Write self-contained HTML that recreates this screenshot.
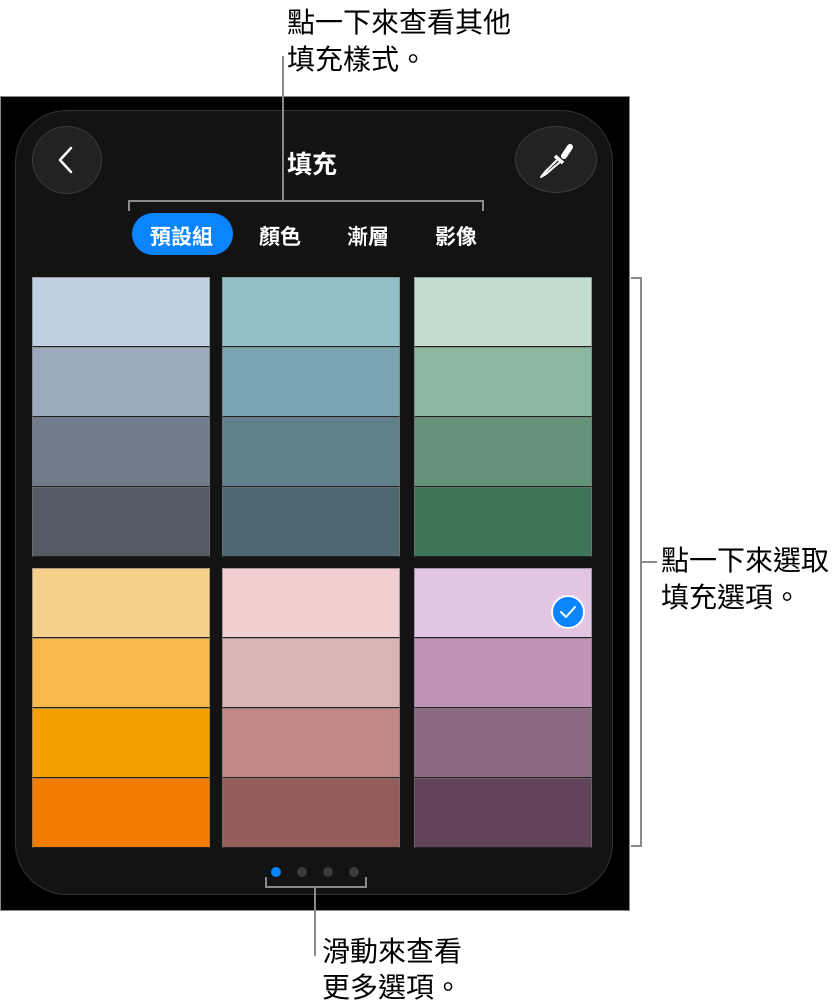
<!DOCTYPE html>
<html><head><meta charset="utf-8"><style>
*{margin:0;padding:0;box-sizing:border-box}
body{width:838px;height:1008px;background:#fff;position:relative;overflow:hidden;font-family:"Liberation Sans","Noto Sans CJK TC",sans-serif}
.abs{position:absolute}
.frame{left:0;top:96px;width:630px;height:815px;background:#000;border:1px solid #888}
.panel{left:15px;top:110px;width:598px;height:785px;background:#131313;border:1.5px solid #333;border-radius:52px}
.btn{background:#222;border:1.5px solid #3a3a3a;border-radius:50%}
.t{color:#fff;font-size:21px;font-weight:bold;white-space:nowrap}
.ann{color:#000;font-size:28px;line-height:37px;white-space:nowrap}
.sw{position:absolute;width:178px}
.sw div{height:70px;border:1px solid rgba(120,120,120,.6);border-bottom:1.5px solid #222}
.g{background:#8a8a8a}
.dot{position:absolute;top:867px;width:10px;height:10px;border-radius:50%;background:#3a3a3c}
</style></head><body>
<div class="abs ann" style="left:287px;top:4px">點一下來查看其他<br>填充樣式。</div>
<div class="abs frame"></div>
<div class="abs panel"></div>
<div class="abs g" style="left:282px;top:56px;width:2px;height:146px"></div>
<div class="abs g" style="left:128px;top:200px;width:356px;height:2px"></div>
<div class="abs g" style="left:128px;top:200px;width:2px;height:11px"></div>
<div class="abs g" style="left:482px;top:200px;width:2px;height:11px"></div>
<div class="abs btn" style="left:32px;top:126px;width:70px;height:68px"></div>
<svg class="abs" style="left:52px;top:145px" width="30" height="30"><path d="M19 3 L8 15 L19 27" stroke="#fff" stroke-width="2.5" fill="none" stroke-linecap="round" stroke-linejoin="round"/></svg>
<div class="abs btn" style="left:515px;top:126px;width:82px;height:67px"></div>
<svg class="abs" style="left:515px;top:126px" width="82" height="67"><path d="M55 21 L49 30" stroke="#fff" stroke-width="6" stroke-linecap="round"/><path d="M40 30 L48 37" stroke="#fff" stroke-width="3.5"/><path d="M42 34 L30 46 L26 51 L31 48 L45 36" stroke="#fff" stroke-width="2" fill="none" stroke-linejoin="round"/></svg>
<div class="abs t" style="left:287px;top:145px;font-size:25px">填充</div>
<div class="abs" style="left:132px;top:213px;width:101px;height:42px;border-radius:21px;background:#0a84ff"></div>
<div class="abs t" style="left:150px;top:221px">預設組</div>
<div class="abs t" style="left:259px;top:221px">顏色</div>
<div class="abs t" style="left:347px;top:221px">漸層</div>
<div class="abs t" style="left:435px;top:221px">影像</div>

<div class="sw" style="left:32px;top:277px"><div style="background:#c1d0e0"></div><div style="background:#9caabb"></div><div style="background:#707c8c"></div><div style="background:#525a63"></div></div>
<div class="sw" style="left:222px;top:277px"><div style="background:#93c1c7"></div><div style="background:#79a5b0"></div><div style="background:#5e818a"></div><div style="background:#4e6870"></div></div>
<div class="sw" style="left:414px;top:277px"><div style="background:#c2dcce"></div><div style="background:#8bb99f"></div><div style="background:#65937a"></div><div style="background:#3d7556"></div></div>
<div class="sw" style="left:32px;top:568px"><div style="background:#f6cf8a"></div><div style="background:#f8b84c"></div><div style="background:#f5a000"></div><div style="background:#f27d02"></div></div>
<div class="sw" style="left:222px;top:568px"><div style="background:#f2cfcf"></div><div style="background:#dab4b4"></div><div style="background:#c38787"></div><div style="background:#955c5c"></div></div>
<div class="sw" style="left:414px;top:568px"><div style="background:#e2c5e3"></div><div style="background:#c194b7"></div><div style="background:#8b6a81"></div><div style="background:#614459"></div></div>
<svg class="abs" style="left:550px;top:594px" width="36" height="36"><circle cx="18" cy="18" r="16" fill="#0a84ff" stroke="#fff" stroke-width="2"/><path d="M11 18 L16 23 L25 13" stroke="#fff" stroke-width="2" fill="none" stroke-linecap="round" stroke-linejoin="round"/></svg>

<div class="dot" style="left:271px;background:#0a84ff"></div>
<div class="dot" style="left:297px"></div>
<div class="dot" style="left:323px"></div>
<div class="dot" style="left:349px"></div>
<div class="abs g" style="left:265px;top:886px;width:102px;height:2px"></div>
<div class="abs g" style="left:265px;top:877px;width:2px;height:10px"></div>
<div class="abs g" style="left:365px;top:877px;width:2px;height:10px"></div>
<div class="abs g" style="left:314px;top:886px;width:2px;height:70px"></div>
<div class="abs ann" style="left:322px;top:934px;line-height:36px">滑動來查看<br>更多選項。</div>

<div class="abs g" style="left:631px;top:277px;width:10px;height:2px"></div>
<div class="abs g" style="left:640px;top:277px;width:2px;height:570px"></div>
<div class="abs g" style="left:631px;top:845px;width:10px;height:2px"></div>
<div class="abs g" style="left:641px;top:561px;width:16px;height:2px"></div>
<div class="abs ann" style="left:661px;top:542px">點一下來選取<br>填充選項。</div>
</body></html>
